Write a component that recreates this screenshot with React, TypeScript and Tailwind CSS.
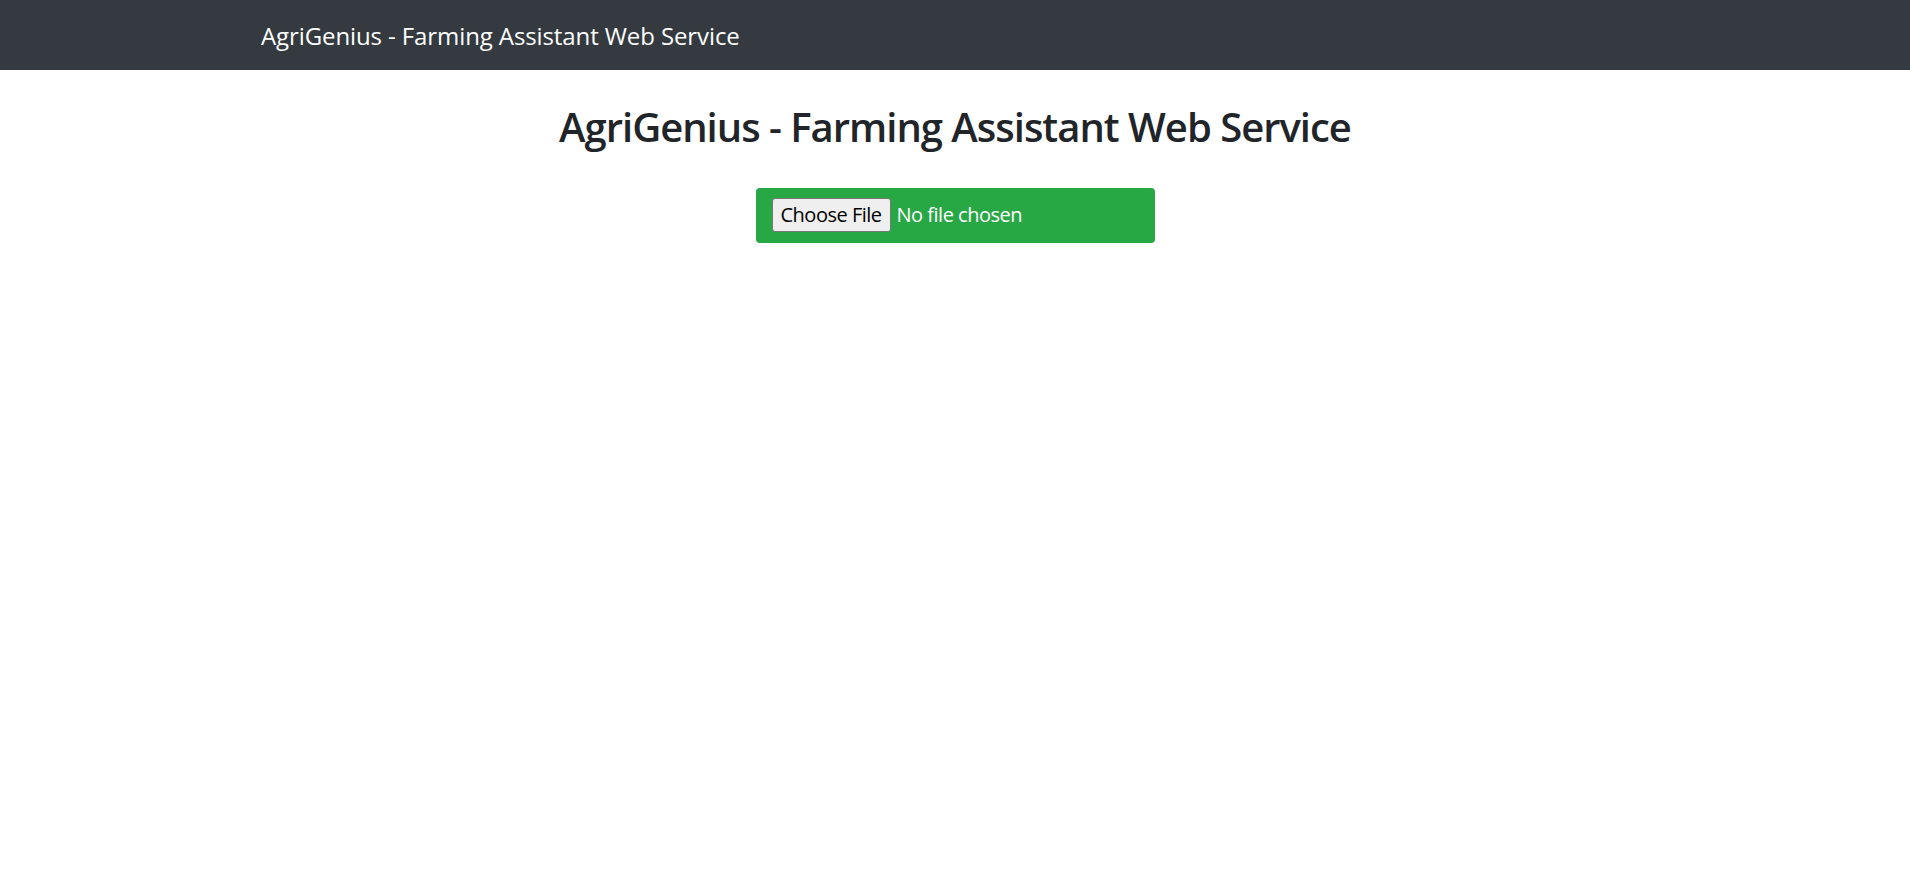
import React, { useState } from 'react';

const App: React.FC = () => {
  const [fileName, setFileName] = useState('');

  return (
    <div className="min-h-screen bg-white font-['Open_Sans','Noto_Sans',Arial,sans-serif]">
      <nav className="h-[70px] bg-[#343a40] flex items-center">
        <div className="pl-[261px] pt-[1px]">
          <span className="text-[24px] text-white tracking-[-0.1px]">AgriGenius - Farming Assistant Web Service</span>
        </div>
      </nav>
      <main className="flex flex-col items-center pt-[33px]">
        <h1 className="text-[40px] leading-[1.2] font-semibold text-[#212529] tracking-[-1px]">
          AgriGenius - Farming Assistant Web Service
        </h1>
        <form className="mt-[37px] w-[399px] rounded-[4px] bg-[#28a745] px-4 pt-[10px] pb-[11px]">
          <input
            type="file"
            onChange={(e) => setFileName(e.target.files?.[0]?.name ?? '')}
            title={fileName}
            className="block w-full text-[20px] leading-[1.5] text-white tracking-[-0.5px] file:mr-[6px] file:rounded-[3px] file:border file:border-[#767676] file:bg-[#efefef] file:px-2 file:py-[1px] file:text-black"
          />
        </form>
      </main>
    </div>
  );
};

export default App;
